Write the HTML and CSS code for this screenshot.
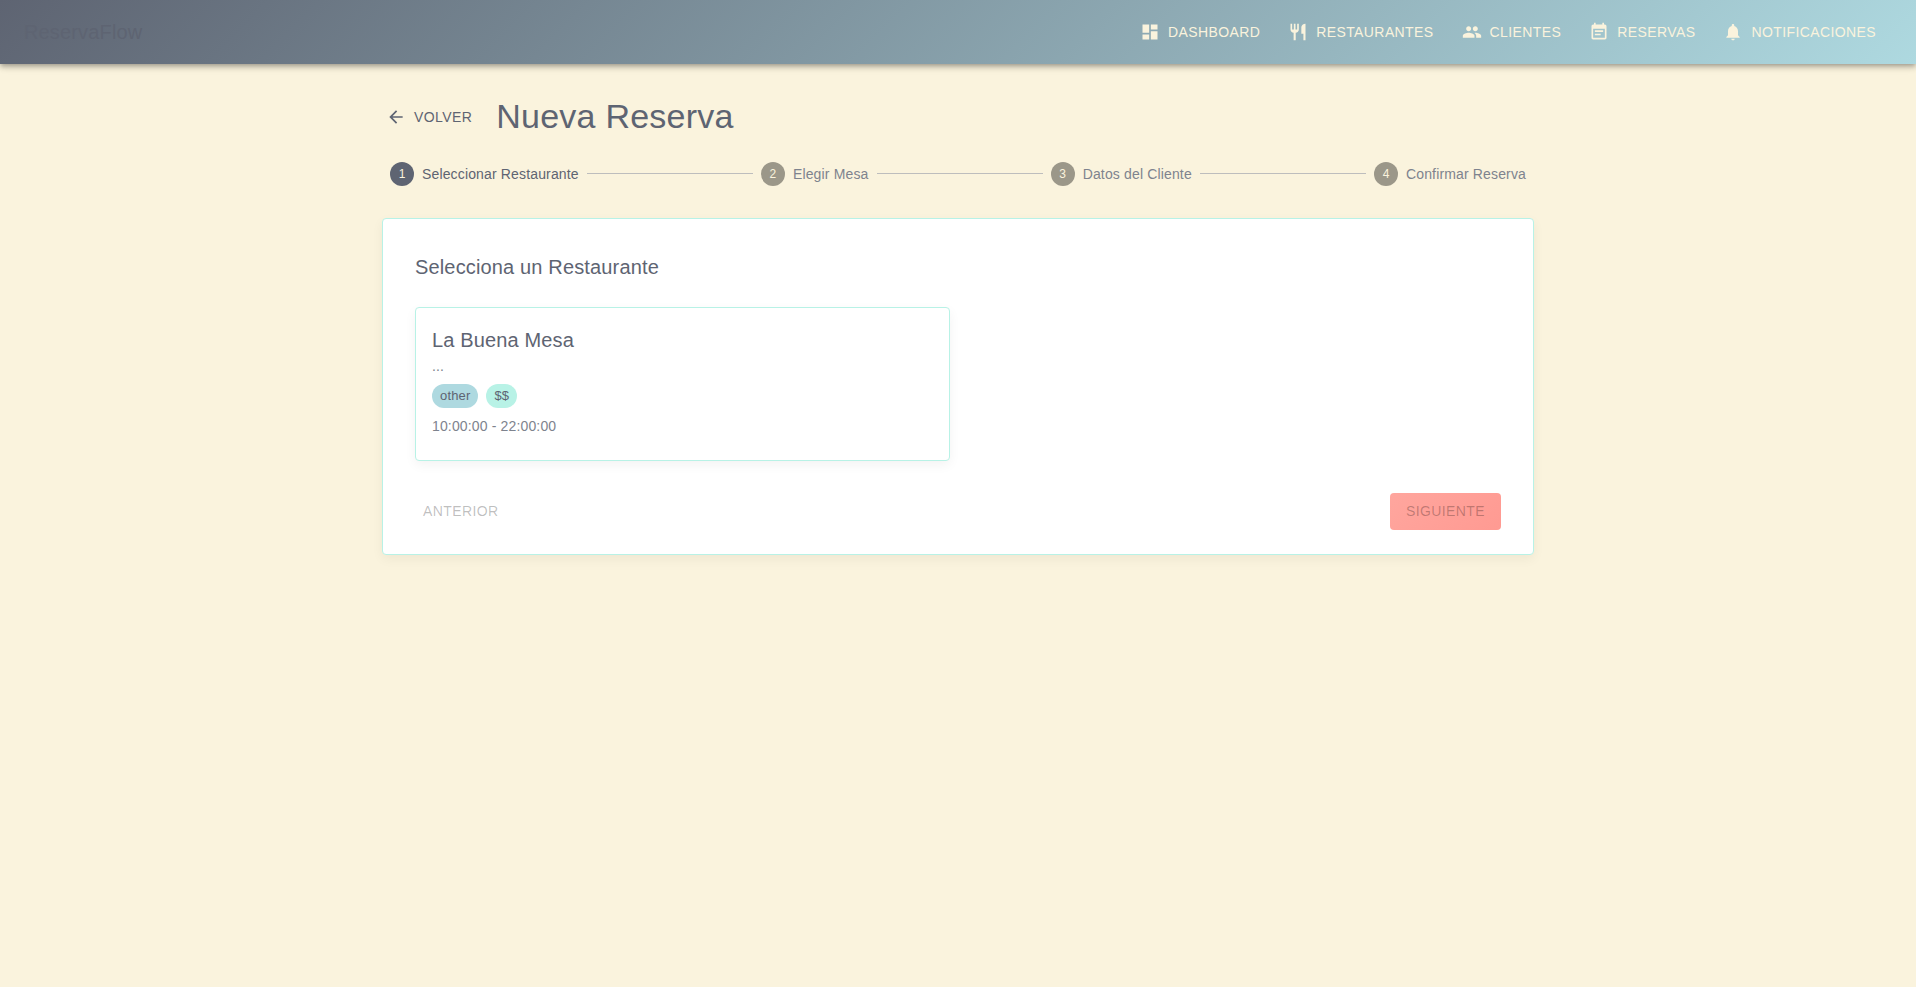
FILE: index.html
```html
<!DOCTYPE html>
<html lang="es">
<head>
<meta charset="utf-8">
<title>ReservaFlow</title>
<link rel="stylesheet" href="styles.css">
</head>
<body>
<header class="appbar">
  <div class="brand">ReservaFlow</div>
  <nav class="nav">
    <a class="btn nav-link"><svg class="icon" viewBox="0 0 24 24"><path d="M3 13h8V3H3v10zm0 8h8v-6H3v6zm10 0h8V11h-8v10zm0-18v6h8V3h-8z"/></svg>Dashboard</a>
    <a class="btn nav-link"><svg class="icon" viewBox="0 0 24 24"><path d="M11 9H9V2H7v7H5V2H3v7c0 2.12 1.66 3.84 3.75 3.97V22h2.5v-9.03C11.34 12.84 13 11.12 13 9V2h-2v7zm5-3v8h2.5v8H21V2c-2.76 0-5 2.24-5 4z"/></svg>Restaurantes</a>
    <a class="btn nav-link"><svg class="icon" viewBox="0 0 24 24"><path d="M16 11c1.66 0 2.99-1.34 2.99-3S17.66 5 16 5c-1.66 0-3 1.34-3 3s1.34 3 3 3zm-8 0c1.66 0 2.99-1.34 2.99-3S9.66 5 8 5C6.34 5 5 6.34 5 8s1.34 3 3 3zm0 2c-2.33 0-7 1.17-7 3.5V19h14v-2.5c0-2.33-4.67-3.5-7-3.5zm8 0c-.29 0-.62.02-.97.05 1.16.84 1.97 1.97 1.97 3.45V19h6v-2.5c0-2.33-4.67-3.5-7-3.5z"/></svg>Clientes</a>
    <a class="btn nav-link"><svg class="icon" viewBox="0 0 24 24"><path d="M17 10H7v2h10v-2zm2-7h-1V1h-2v2H8V1H6v2H5c-1.11 0-1.99.9-1.99 2L3 19c0 1.1.89 2 2 2h14c1.1 0 2-.9 2-2V5c0-1.1-.9-2-2-2zm0 16H5V8h14v11zm-5-5H7v2h7v-2z"/></svg>Reservas</a>
    <a class="btn nav-link"><svg class="icon" viewBox="0 0 24 24"><path d="M12 22c1.1 0 2-.9 2-2h-4c0 1.1.89 2 2 2zm6-6v-5c0-3.07-1.64-5.64-4.5-6.32V4c0-.83-.67-1.5-1.5-1.5s-1.5.67-1.5 1.5v.68C7.63 5.36 6 7.92 6 11v5l-2 2v1h16v-1l-2-2z"/></svg>Notificaciones</a>
  </nav>
</header>
<main class="container">
  <div class="page-head">
    <button class="btn back"><svg class="icon" viewBox="0 0 24 24"><path d="M20 11H7.83l5.59-5.59L12 4l-8 8 8 8 1.41-1.41L7.83 13H20v-2z"/></svg>Volver</button>
    <h1 class="title">Nueva Reserva</h1>
  </div>
  <div class="stepper">
    <div class="step active"><span class="step-num">1</span>Seleccionar Restaurante</div>
    <div class="connector"></div>
    <div class="step"><span class="step-num">2</span>Elegir Mesa</div>
    <div class="connector"></div>
    <div class="step"><span class="step-num">3</span>Datos del Cliente</div>
    <div class="connector"></div>
    <div class="step"><span class="step-num">4</span>Confirmar Reserva</div>
  </div>
  <section class="card panel">
    <h2 class="heading">Selecciona un Restaurante</h2>
    <div class="grid">
      <article class="card restaurant">
        <h3 class="heading">La Buena Mesa</h3>
        <p class="meta">...</p>
        <div class="chips"><span class="chip">other</span><span class="chip price">$$</span></div>
        <p class="meta">10:00:00 - 22:00:00</p>
      </article>
    </div>
    <div class="actions">
      <button class="btn prev" disabled>Anterior</button>
      <button class="btn next" disabled>Siguiente</button>
    </div>
  </section>
</main>
</body>
</html>
```

FILE: styles.css
```css
* { box-sizing: border-box; }
body {
  margin: 0;
  min-height: 100vh;
  background: #faf3dd;
  color: #5e6472;
  font-family: "Liberation Sans", Arial, sans-serif;
}
h1, h2, h3, p { margin: 0; font-weight: 400; }

.appbar {
  display: flex;
  align-items: center;
  justify-content: space-between;
  height: 64px;
  padding: 0 24px;
  background: linear-gradient(135deg, #5e6472 0%, #aed9e0 100%);
  box-shadow: 0 2px 4px -1px rgba(0,0,0,.2), 0 4px 5px 0 rgba(0,0,0,.14), 0 1px 10px 0 rgba(0,0,0,.12);
}
.brand { font-size: 20px; line-height: 1.6; letter-spacing: .0075em; }
.nav { display: flex; }

.btn {
  display: inline-flex;
  align-items: center;
  justify-content: center;
  min-width: 64px;
  padding: 6px 8px;
  border: 0;
  border-radius: 4px;
  background: transparent;
  color: #5e6472;
  font: 14px/1.75 "Liberation Sans", Arial, sans-serif;
  letter-spacing: .02857em;
  text-transform: uppercase;
}
.nav-link { padding: 6px 16px; color: #faf3dd; }
.icon { width: 20px; height: 20px; margin: 0 8px 0 -4px; fill: currentColor; }

.container { width: 1152px; margin: 32px auto 0; }
.page-head { display: flex; align-items: center; gap: 16px; height: 42px; margin-bottom: 24px; }
.back { padding-left: 8px; }
.title { font-size: 34px; line-height: 1.235; letter-spacing: .00735em; }

.stepper { display: flex; align-items: center; margin-bottom: 32px; }
.step {
  display: flex;
  align-items: center;
  gap: 8px;
  height: 24px;
  padding: 0 8px;
  color: #7e838e;
  font-size: 14px;
  line-height: 1.43;
  letter-spacing: .01071em;
}
.step.active { color: #5e6472; }
.step-num {
  width: 24px;
  height: 24px;
  border-radius: 50%;
  background: #9b9789;
  color: #faf3dd;
  font-size: 12px;
  line-height: 24px;
  letter-spacing: 0;
  text-align: center;
}
.active .step-num { background: #5e6472; }
.connector { flex: 1 1 auto; height: 2px; border-top: 1px solid #bdbdbd; }

.card {
  border: 1px solid #b8f2e6;
  border-radius: 4px;
  background: #fff;
  box-shadow: 0 4px 12px rgba(0,0,0,.05);
}
.panel { padding: 32px 32px 24px; }
.heading { font-size: 20px; line-height: 32px; letter-spacing: .0075em; }
.grid { display: grid; grid-template-columns: 1fr 1fr; gap: 16px; margin: 24px 0 32px; }
.restaurant { padding: 16px 16px 24px; }
.meta { color: #7e838e; font-size: 14px; line-height: 20px; letter-spacing: .01071em; }
.chips { display: flex; gap: 8px; margin: 8px 0; }
.chip {
  height: 24px;
  padding: 0 8px;
  border-radius: 12px;
  background: #aed9e0;
  font-size: 13px;
  line-height: 24px;
  letter-spacing: .15px;
}
.price { background: #b8f2e6; }
.actions { display: flex; justify-content: space-between; }
.prev { color: rgba(0,0,0,.26); }
.next {
  padding: 6px 16px;
  background: linear-gradient(135deg, #ffa69e 0%, #ff9a92 100%);
  color: rgba(0,0,0,.26);
}
```
